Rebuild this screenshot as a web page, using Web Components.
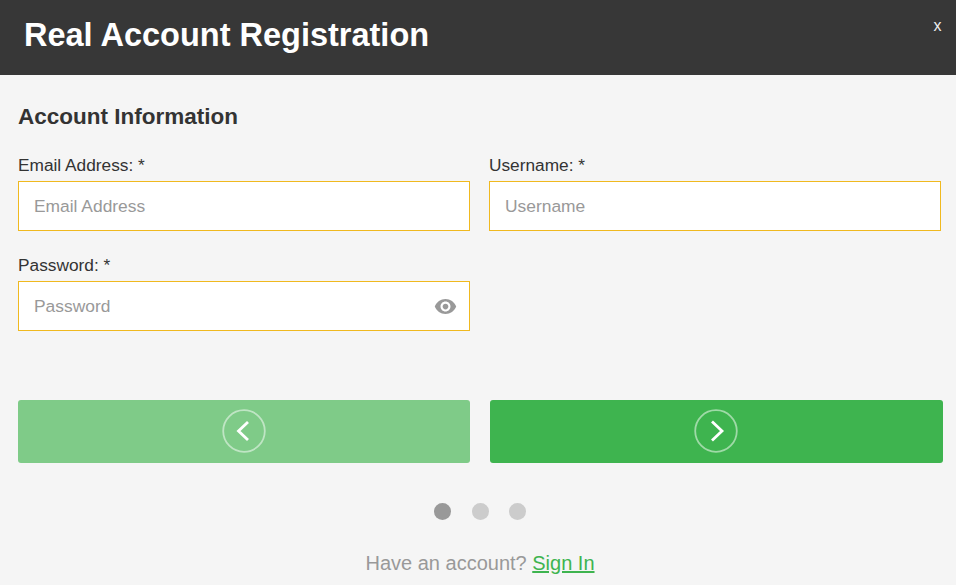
<!DOCTYPE html>
<html lang="en">
<head>
<meta charset="utf-8">
<title>Real Account Registration</title>
<style>
  html, body { margin: 0; height: 585px; overflow: hidden; background: #f5f5f5; font-family: "Liberation Sans", Arial, sans-serif; }
</style>
</head>
<body>
<reg-modal>
  <span slot="title">Real Account Registration</span>
  <span slot="section">Account Information</span>
  <form-field label="Email Address: *" placeholder="Email Address"></form-field>
  <form-field label="Username: *" placeholder="Username"></form-field>
  <form-field label="Password: *" placeholder="Password" type="password"></form-field>
</reg-modal>

<script>
const fieldTemplate = document.createElement('template');
fieldTemplate.innerHTML = `
  <style>
    :host { display: block; }
    label {
      display: block;
      font-size: 17.3px;
      line-height: 20px;
      color: #333;
      margin-bottom: 6px;
    }
    .box {
      display: flex;
      align-items: center;
      height: 50px;
      box-sizing: border-box;
      border: 1px solid #f0b91f;
      background: #fff;
      padding: 0 12px 0 15px;
    }
    input {
      flex: 1;
      min-width: 0;
      border: 0;
      outline: 0;
      padding: 0;
      background: none;
      font: 17.4px "Liberation Sans", Arial, sans-serif;
      color: #333;
    }
    input::placeholder { color: #999; opacity: 1; }
    svg { display: none; width: 23px; height: 23px; flex: none; }
    :host([type="password"]) svg { display: block; }
  </style>
  <label></label>
  <div class="box">
    <input type="text">
    <svg viewBox="0 0 24 24" fill="#999"><path d="M12 4.2C7 4.2 2.6 7.4 .8 12c1.8 4.6 6.2 7.8 11.2 7.8s9.4-3.2 11.2-7.8C21.4 7.4 17 4.2 12 4.2zM12 17.2c-2.9 0-5.2-2.3-5.2-5.2s2.3-5.2 5.2-5.2 5.2 2.3 5.2 5.2-2.3 5.2-5.2 5.2zm0-8.2c-1.66 0-3 1.34-3 3s1.34 3 3 3 3-1.34 3-3-1.34-3-3-3z"/></svg>
  </div>
`;

class FormField extends HTMLElement {
  constructor() {
    super();
    this.attachShadow({ mode: 'open' });
    this.shadowRoot.appendChild(fieldTemplate.content.cloneNode(true));
  }

  connectedCallback() {
    this.shadowRoot.querySelector('label').textContent = this.getAttribute('label');
    const input = this.shadowRoot.querySelector('input');
    input.placeholder = this.getAttribute('placeholder');
    if (this.getAttribute('type')) input.type = this.getAttribute('type');
  }
}
customElements.define('form-field', FormField);

const navTemplate = document.createElement('template');
navTemplate.innerHTML = `
  <style>
    :host { display: block; }
    button {
      display: flex;
      align-items: center;
      justify-content: center;
      width: 100%;
      height: 63px;
      padding: 0 0 2px;
      border: 0;
      border-radius: 3px;
      background: #3eb44f;
      cursor: pointer;
    }
    :host([disabled]) button { background: #7fcb88; }
    :host([dir="next"]) button { padding-right: 2px; }
    svg { width: 44px; height: 44px; display: block; }
  </style>
  <button type="button">
    <svg viewBox="0 0 44 44" fill="none">
      <circle cx="22" cy="22" r="20.8" stroke="#fff" stroke-opacity=".5" stroke-width="1.8"/>
      <path stroke="#fff" stroke-width="2.8" d=""/>
    </svg>
  </button>
`;

class NavButton extends HTMLElement {
  constructor() {
    super();
    this.attachShadow({ mode: 'open' });
    this.shadowRoot.appendChild(navTemplate.content.cloneNode(true));
  }

  connectedCallback() {
    const d = this.getAttribute('dir') === 'prev' ? 'M26 13 L16.5 22 L26 31' : 'M18 12.5 L28 22 L18 31.5';
    this.shadowRoot.querySelector('path').setAttribute('d', d);
  }
}
customElements.define('nav-button', NavButton);

class StepDots extends HTMLElement {
  constructor() {
    super();
    this.attachShadow({ mode: 'open' });
    this.shadowRoot.innerHTML = `
      <style>
        :host { display: flex; justify-content: center; gap: 20.5px; padding-left: 1px; }
        i { width: 17px; height: 17px; border-radius: 50%; background: #ccc; }
        i.on { background: #999; }
      </style>
      <i class="on"></i><i></i><i></i>
    `;
  }
}
customElements.define('step-dots', StepDots);

const modalTemplate = document.createElement('template');
modalTemplate.innerHTML = `
  <style>
    :host { display: block; position: relative; width: 956px; height: 585px; background: #f5f5f5; overflow: hidden; }
    header {
      height: 75px;
      box-sizing: border-box;
      padding: 15px 24px 0;
      background: #373737;
      color: #fff;
      font-size: 32.5px;
      line-height: 40px;
      font-weight: bold;
    }
    .close {
      position: absolute;
      top: 17px;
      right: 14.5px;
      color: #eee;
      font-size: 16px;
      line-height: 18px;
    }
    main { padding: 28px 15px 0 18px; }
    h2 {
      margin: 0 0 24px;
      font-size: 22.5px;
      line-height: 28px;
      font-weight: bold;
      color: #333;
    }
    .fields {
      display: grid;
      grid-template-columns: 452px 452px;
      column-gap: 19px;
      row-gap: 24px;
    }
    .nav {
      display: grid;
      grid-template-columns: 452px 453px;
      column-gap: 20px;
      margin-top: 69px;
    }
    step-dots { margin-top: 40px; }
    p {
      margin: 31px 0 0;
      padding-left: 1px;
      text-align: center;
      font-size: 20px;
      line-height: 24px;
      color: #999;
    }
    a { color: #3eb44f; text-decoration: underline; }
  </style>
  <header><slot name="title"></slot></header>
  <span class="close">x</span>
  <main>
    <h2><slot name="section"></slot></h2>
    <div class="fields"><slot></slot></div>
    <div class="nav">
      <nav-button dir="prev" disabled></nav-button>
      <nav-button dir="next"></nav-button>
    </div>
    <step-dots></step-dots>
    <p>Have an account? <a href="#">Sign In</a></p>
  </main>
`;

class RegModal extends HTMLElement {
  constructor() {
    super();
    this.attachShadow({ mode: 'open' });
    this.shadowRoot.appendChild(modalTemplate.content.cloneNode(true));
  }
}
customElements.define('reg-modal', RegModal);
</script>
</body>
</html>
